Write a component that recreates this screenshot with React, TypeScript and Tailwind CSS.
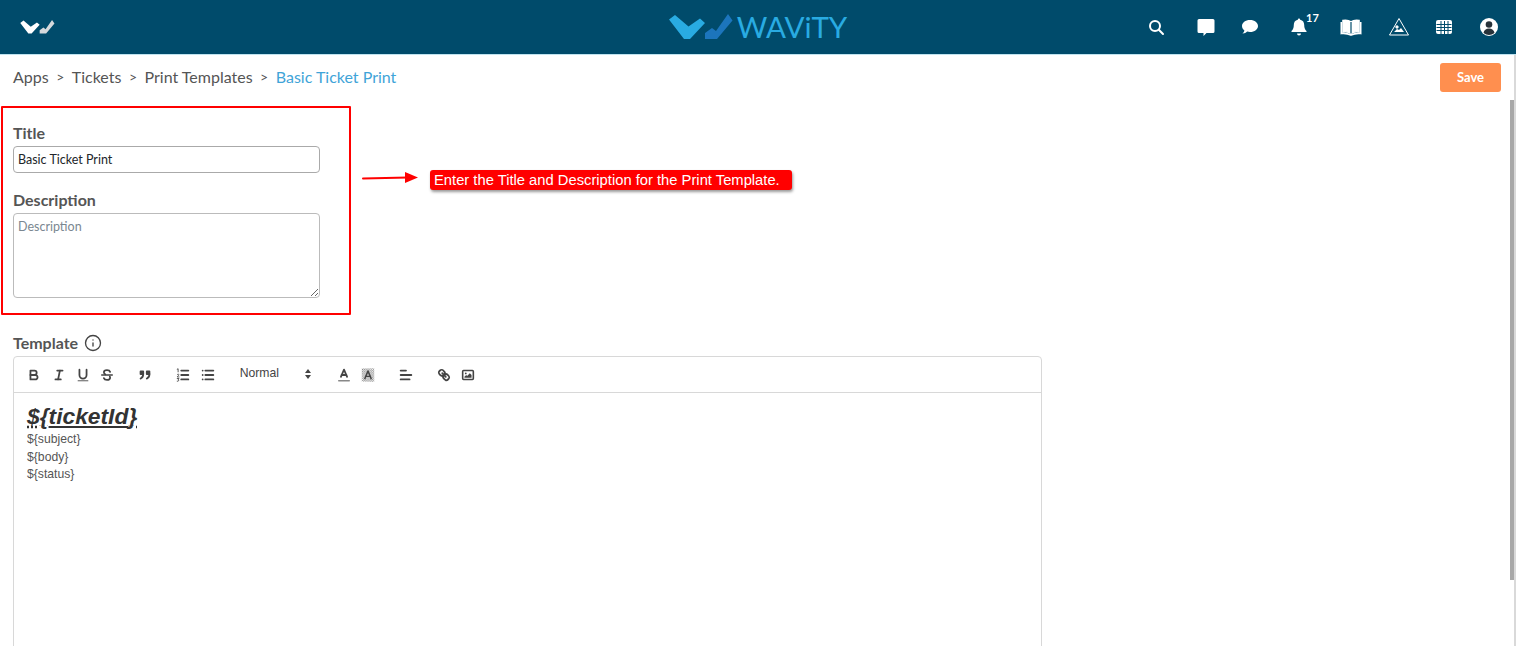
import { Info } from 'lucide-react';
import type { ReactNode } from 'react';

function LogoMark({ light, dark, className }: { light: string; dark: string; className: string }) {
  return (
    <svg viewBox="0 0 64 26" className={className}>
      <polygon points="0,5.5 6,1 19.5,12.5 31,4.5 36,9 21,25 15,25" fill={light} />
      <polygon points="36,19 43,14 47,17 59,0 63.5,6.5 48,25 36,25" fill={dark} />
    </svg>
  );
}

function HeaderIcons() {
  return (
    <div className="flex items-center justify-end pr-[17px] text-white">
      <svg viewBox="0 0 20 20" className="w-5 h-5" fill="none" stroke="white" strokeWidth="2">
        <circle cx="9" cy="9" r="5" />
        <line x1="12.8" y1="12.8" x2="17" y2="17" strokeLinecap="round" />
      </svg>
      <svg viewBox="0 0 20 20" className="w-5 h-5 ml-[30px]" fill="white">
        <path d="M3 2h14a1.5 1.5 0 0 1 1.5 1.5v11a1.5 1.5 0 0 1-1.5 1.5h-6.5l-3 3v-3H3a1.5 1.5 0 0 1-1.5-1.5v-11A1.500 1.500 0 0 1 3 2z" />
      </svg>
      <svg viewBox="0 0 20 20" className="w-5 h-5 ml-6" fill="white">
        <path d="M10 3c4.700 0 8 2.700 8 6s-3.300 6-8 6c-1 0-2-.1-2.800-.4C6 15.800 4.300 16.600 2.500 16.500c1-.8 1.700-1.800 1.900-3C2.900 12.400 2 10.800 2 9c0-3.300 3.300-6 8-6z" />
      </svg>
      <div className="relative w-5 h-5 ml-[29px]">
        <svg viewBox="0 0 20 20" className="w-5 h-5" fill="white">
          <path d="M10 1.500a1.200 1.200 0 0 1 1.200 1.200c2.800.6 4 2.600 4 5.300 0 3 .8 4.600 2.300 6v1H2.500v-1c1.500-1.400 2.300-3 2.300-6 0-2.700 1.200-4.700 4-5.300A1.200 1.200 0 0 1 10 1.500z" />
          <path d="M8 16.500h4a2 2 0 0 1-4 0z" />
        </svg>
        <span className="absolute left-[17px] top-[-6px] text-[11px] font-bold leading-[14px]">17</span>
      </div>
      <svg viewBox="0 0 22 20" className="w-[22px] h-5 ml-[31px]" fill="none" stroke="white" strokeWidth="1.600">
        <path d="M11 5C9 3.500 6 3 3 3.500V15c3-.5 6 0 8 1.500 2-1.500 5-2 8-1.500V3.500C16 3 13 3.500 11 5z" fill="white" />
        <path d="M11 5v11.500" stroke="#004b6b" strokeWidth="1.200" />
        <path d="M1.300 5v11.500c3.500-.4 6.500 0 9.700 1.500 3.200-1.500 6.200-1.900 9.700-1.500V5" />
      </svg>
      <svg viewBox="0 0 22 20" className="w-[22px] h-5 ml-[26px]" fill="none" stroke="white" strokeWidth="1">
        <path d="M11 1.500L20.500 18H1.500z" strokeLinejoin="round" />
        <circle cx="9" cy="10" r="1.200" fill="white" />
        <path d="M6 15l3-3 2 1 2-2 3 4z" fill="white" stroke="none" />
      </svg>
      <svg viewBox="0 0 20 20" className="w-5 h-5 ml-6" fill="none">
        <rect x="2" y="3" width="16" height="14" rx="2" fill="white" />
        <path d="M2.500 7.500h15M2.500 10.500h15M2.500 13.500h15M7 4v13M10.500 4v13M14 4v13" stroke="#004b6b" strokeWidth="1" />
      </svg>
      <svg viewBox="0 0 20 20" className="w-5 h-5 ml-[25px]">
        <circle cx="10" cy="10" r="9" fill="white" />
        <circle cx="10" cy="7.500" r="3.300" fill="#27323a" />
        <path d="M4.500 16c.5-3 2.500-4.500 5.500-4.500s5 1.500 5.500 4.500a9 9 0 0 1-11 0z" fill="#27323a" />
      </svg>
    </div>
  );
}

function Header() {
  return (
    <header className="h-[55px] bg-[#004b6b] border-b border-[#bfe3ef] grid grid-cols-[1fr_auto_1fr] items-center">
      <div className="pl-5">
        <LogoMark light="#ffffff" dark="#d5d9dc" className="w-[35px] h-[14px]" />
      </div>
      <div className="flex items-center">
        <LogoMark light="#29abe2" dark="#1c75bc" className="w-16 h-[26px]" />
        <span className="ml-1 text-[29.500px] leading-none text-[#29abe2] font-['Lato',sans-serif]">WAViTY</span>
      </div>
      <HeaderIcons />
    </header>
  );
}

function Breadcrumb() {
  return (
    <div className="h-[45px] pb-[2px] pl-[13px] pr-[15px] flex items-center justify-between">
      <nav className="flex items-center text-base text-[#555]">
        <span>Apps</span>
        <span className="mx-[7.500px] text-sm">&gt;</span>
        <span>Tickets</span>
        <span className="mx-[7.500px] text-sm">&gt;</span>
        <span>Print Templates</span>
        <span className="mx-[7.500px] text-sm">&gt;</span>
        <span className="text-[#3fa4d8]">Basic Ticket Print</span>
      </nav>
      <button className="w-[61px] h-[29px] mt-[2px] rounded-[3px] bg-[#ff8f4f] text-white text-[13px] font-bold">Save</button>
    </div>
  );
}

function ToolIcon({ children, className = '' }: { children: ReactNode; className?: string }) {
  return (
    <span className={`w-[24.400px] h-6 flex items-center justify-center ${className}`}>
      <svg viewBox="0 0 18 18" className="w-4 h-4" fill="none" stroke="#444" strokeWidth="2" strokeLinecap="round" strokeLinejoin="round">
        {children}
      </svg>
    </span>
  );
}

function Toolbar() {
  return (
    <div className="h-9 border-b border-[#d8d8d8] pl-2 flex items-center">
      <ToolIcon>
        <path d="M5,4H9.500A2.500,2.500,0,0,1,12,6.500v0A2.500,2.500,0,0,1,9.500,9H5V4Z" />
        <path d="M5,9h5.500A2.500,2.500,0,0,1,13,11.500v0A2.500,2.500,0,0,1,10.500,14H5V9Z" />
      </ToolIcon>
      <ToolIcon>
        <line x1="7" x2="13" y1="4" y2="4" />
        <line x1="5" x2="11" y1="14" y2="14" />
        <line x1="8" x2="10" y1="14" y2="4" />
      </ToolIcon>
      <ToolIcon>
        <path d="M5,3V9a4,4,0,0,0,4,4h0a4,4,0,0,0,4-4V3" />
        <line x1="3.500" x2="14.500" y1="15.500" y2="15.500" strokeWidth="1" />
      </ToolIcon>
      <ToolIcon>
        <line x1="3" x2="15" y1="9" y2="9" strokeWidth="1.500" />
        <path d="M12.500 5.500C12 4 10.500 3.500 9 3.500 7 3.500 5.500 4.500 5.500 6c0 1 .5 1.700 1.500 2.200" />
        <path d="M5.500 12.500C6 14 7.500 14.500 9 14.500c2 0 3.500-1 3.500-2.500 0-.5-.1-.8-.3-1.200" />
      </ToolIcon>
      <ToolIcon className="ml-[13.500px]">
        <rect x="4" y="5" width="3" height="3" fill="#444" />
        <rect x="11" y="5" width="3" height="3" fill="#444" />
        <path d="M7,8c0,4-3,5-3,5" />
        <path d="M14,8c0,4-3,5-3,5" />
      </ToolIcon>
      <ToolIcon className="ml-[13.500px]">
        <line x1="7" x2="15" y1="4" y2="4" />
        <line x1="7" x2="15" y1="9" y2="9" />
        <line x1="7" x2="15" y1="14" y2="14" />
        <path d="M2.500 2.500l1-.5v3.500M2.500 8.500c.5-.7 2-.5 2 .3 0 .8-2 1.500-2 2.400h2M2.500 13h2l-1 1.500c1 0 1 2-1 1.500" strokeWidth="1" />
      </ToolIcon>
      <ToolIcon>
        <line x1="6" x2="15" y1="4" y2="4" />
        <line x1="6" x2="15" y1="9" y2="9" />
        <line x1="6" x2="15" y1="14" y2="14" />
        <line x1="3" x2="3" y1="4" y2="4" />
        <line x1="3" x2="3" y1="9" y2="9" />
        <line x1="3" x2="3" y1="14" y2="14" />
      </ToolIcon>
      <div className="w-[99px] ml-[13px] pl-[7px] pr-[20px] flex items-center justify-between text-[12.200px] text-[#444] font-['Liberation_Sans',sans-serif] mb-[2px]">
        <span>Normal</span>
        <svg viewBox="0 0 8 12" className="w-2 h-3 mt-[2px]" fill="#444">
          <polygon points="4,1 7,5 1,5" />
          <polygon points="4,11 7,7 1,7" />
        </svg>
      </div>
      <ToolIcon>
        <line x1="3" x2="15" y1="15.500" y2="15.500" strokeWidth="1.500" stroke="#888" />
        <polyline points="5.500 11 9 3 12.500 11" />
        <line x1="11.630" x2="6.380" y1="9" y2="9" />
      </ToolIcon>
      <ToolIcon>
        <defs>
          <pattern id="hatch" width="2.400" height="2.400" patternUnits="userSpaceOnUse">
            <rect width="1.200" height="1.200" fill="#888" stroke="none" />
            <rect x="1.200" y="1.200" width="1.200" height="1.200" fill="#888" stroke="none" />
          </pattern>
        </defs>
        <rect x="2" y="1.500" width="14" height="15" fill="url(#hatch)" stroke="none" />
        <polyline points="5.500 13 9 4.500 12.500 13" strokeWidth="1.800" />
        <line x1="11.600" x2="6.400" y1="10.500" y2="10.500" strokeWidth="1.500" />
      </ToolIcon>
      <ToolIcon className="ml-[13.500px]">
        <line x1="3" x2="9" y1="4" y2="4" />
        <line x1="3" x2="15" y1="9" y2="9" />
        <line x1="3" x2="13" y1="14" y2="14" />
      </ToolIcon>
      <ToolIcon className="ml-[13.500px]">
        <line x1="7" x2="11" y1="7" y2="11" />
        <path d="M8.900,4.577a3.476,3.476,0,0,1,.36,4.679A3.476,3.476,0,0,1,4.577,8.900C3.185,7.500,2.035,6.400,4.217,4.217S7.500,3.185,8.900,4.577Z" />
        <path d="M13.423,9.100a3.476,3.476,0,0,0-4.679-.36,3.476,3.476,0,0,0,.36,4.679c1.392,1.392,2.500,2.542,4.679.36S14.815,10.500,13.423,9.100Z" />
      </ToolIcon>
      <ToolIcon>
        <rect x="3" y="4" width="12" height="10" rx="1" strokeWidth="1.800" />
        <circle cx="6.500" cy="7.200" r="1" fill="#444" stroke="none" />
        <polygon points="5,12 5,11 7,9 8,10 11,7 13,9 13,12" fill="#444" stroke="none" />
      </ToolIcon>
    </div>
  );
}

function Annotation() {
  return (
    <>
      <div className="absolute left-[1px] top-[106px] w-[350px] h-[209px] border-2 border-[#ff0000] rounded-[1px]" />
      <svg className="absolute left-[360px] top-[170px] w-[60px] h-4" viewBox="0 0 60 16">
        <line x1="3" y1="8.500" x2="48" y2="7.500" stroke="#f00" strokeWidth="2" strokeLinecap="round" />
        <polygon points="45,2 58,7.500 45,13" fill="#f00" />
      </svg>
      <div className="absolute left-[430px] top-[170px] w-[362px] h-5 pl-1 bg-[#ff0000] rounded-[3px] shadow-[1px_2px_3px_rgba(0,0,0,0.4)] text-white text-[14.750px] leading-5 font-['Liberation_Sans',sans-serif] whitespace-nowrap">
        Enter the Title and Description for the Print Template.
      </div>
    </>
  );
}

export default function App() {
  return (
    <div className="relative h-[646px] overflow-hidden bg-white font-['Lato',sans-serif]">
      <Header />
      <Breadcrumb />
      <main className="pl-[13px]">
        <label className="block mt-[23px] text-base font-bold leading-5 text-[#555]">Title</label>
        <input
          className="mt-[3px] block w-[307px] h-[27px] px-1 pb-[1px] border border-[#aaa] rounded text-[12.500px] text-[#212529] outline-none"
          defaultValue="Basic Ticket Print"
        />
        <label className="block mt-[17px] text-base font-bold leading-5 text-[#555]">Description</label>
        <textarea
          className="mt-[3px] block w-[307px] h-[85px] px-1 pt-[4px] border border-[#bbb] rounded text-[12.500px] outline-none placeholder:text-[#7a8791]"
          placeholder="Description"
        />
        <div className="mt-[35px] flex items-center text-base font-bold leading-5 text-[#555]">
          <span>Template</span>
          <Info size={18} strokeWidth={1.800} className="ml-[6px] text-[#444]" />
        </div>
        <div className="mt-[3px] w-[1029px] h-[400px] border border-[#d8d8d8] rounded">
          <Toolbar />
          <div className="pt-[10px] pl-[13px] text-[12.200px] leading-[17.500px] text-[#555] font-['Liberation_Sans',sans-serif]">
            <div className="text-[22.800px] leading-[27px] font-bold italic text-[#333] mb-[1px]">
              <span className="underline decoration-dotted">{'${'}</span>
              <span className="underline">ticketId</span>
              <span className="underline decoration-dotted">{'}'}</span>
            </div>
            <div>{'${subject}'}</div>
            <div>{'${body}'}</div>
            <div>{'${status}'}</div>
          </div>
        </div>
      </main>
      <Annotation />
      <div className="absolute right-0 top-[55px] bottom-0 w-[2px] bg-[#d9d9d9]" />
      <div className="absolute right-[2px] top-[100px] w-1 h-[480px] bg-[#a8a8a8]" />
    </div>
  );
}
